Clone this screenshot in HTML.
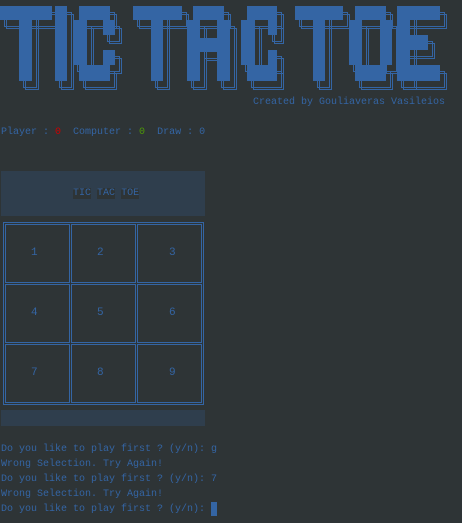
<!DOCTYPE html><html><head><style>
body{margin:0;width:462px;height:523px;background:#2e3436;overflow:hidden;position:relative;font-family:"Liberation Mono","DejaVu Sans Mono",monospace;font-size:10px;color:#3465a4}
.t{position:absolute;white-space:pre;line-height:12px}
.c{position:absolute;border:1px solid #3465a4;box-sizing:border-box;width:65px;height:59px}
.n{position:absolute;font-size:11px}
</style></head><body>
<svg width="462" height="100" style="position:absolute;left:0;top:0">
<defs><g id="L">
<rect x="0" y="6" width="52" height="14"/><rect x="19" y="6" width="13" height="75"/>
<rect x="55" y="6" width="12" height="75"/>
<rect x="79" y="6" width="31" height="14"/><rect x="73" y="20" width="14" height="45"/><rect x="79" y="65" width="31" height="16"/><rect x="103" y="20" width="12" height="15"/><rect x="103" y="50" width="12" height="15"/>
<rect x="133" y="6" width="49" height="14"/><rect x="151" y="6" width="12" height="75"/>
<rect x="187" y="20" width="13" height="61"/><rect x="217" y="20" width="13" height="61"/><rect x="193" y="6" width="31" height="14"/><rect x="200" y="38" width="17" height="14"/>
<rect x="247" y="6" width="30" height="14"/><rect x="241" y="20" width="14" height="45"/><rect x="247" y="65" width="30" height="16"/><rect x="268" y="20" width="9" height="15"/><rect x="268" y="50" width="9" height="15"/>
<rect x="295" y="6" width="48" height="14"/><rect x="313" y="6" width="12" height="75"/>
<rect x="355" y="6" width="31" height="14"/><rect x="349" y="20" width="13" height="45"/><rect x="380" y="20" width="12" height="45"/><rect x="355" y="65" width="31" height="16"/>
<rect x="397" y="6" width="13" height="75"/><rect x="397" y="6" width="43" height="14"/><rect x="397" y="35" width="31" height="15"/><rect x="397" y="65" width="43" height="16"/>
</g></defs>
<g fill="none" stroke="#3465a4" stroke-width="1">
<use href="#L" transform="translate(4.5,6.5)"/>
<use href="#L" transform="translate(6.5,8.5)"/>
</g>
<g fill="#3465a4"><use href="#L"/></g>
</svg>
<div class="t" style="left:253px;top:97px">Created by Gouliaveras Vasileios</div>
<div class="t" style="left:1px;top:127px">Player : <span style="color:#cc0000">0</span>  Computer : <span style="color:#4e9a06">0</span>  Draw : 0</div>
<div style="position:absolute;left:1px;top:171px;width:204px;height:45px;background:#2f3e4d"></div>
<div class="t" style="left:73px;top:188px"><span style="background:#2e3436">TIC</span> <span style="background:#2e3436">TAC</span> <span style="background:#2e3436">TOE</span></div>
<div style="position:absolute;left:3px;top:222px;width:201px;height:183px;border:1px solid #3465a4;box-sizing:border-box"></div>
<div class="c" style="left:5px;top:224px"></div><div class="c" style="left:71px;top:224px"></div><div class="c" style="left:137px;top:224px"></div>
<div class="c" style="left:5px;top:284px"></div><div class="c" style="left:71px;top:284px"></div><div class="c" style="left:137px;top:284px"></div>
<div class="c" style="left:5px;top:344px"></div><div class="c" style="left:71px;top:344px"></div><div class="c" style="left:137px;top:344px"></div>
<div class="n" style="left:31px;top:247px">1</div><div class="n" style="left:97px;top:247px">2</div><div class="n" style="left:169px;top:247px">3</div>
<div class="n" style="left:31px;top:307px">4</div><div class="n" style="left:97px;top:307px">5</div><div class="n" style="left:169px;top:307px">6</div>
<div class="n" style="left:31px;top:367px">7</div><div class="n" style="left:97px;top:367px">8</div><div class="n" style="left:169px;top:367px">9</div>
<div style="position:absolute;left:1px;top:410px;width:204px;height:16px;background:#2f3e4d"></div>
<div class="t" style="left:1px;top:442px;line-height:15px">Do you like to play first ? (y/n): g
Wrong Selection. Try Again!
Do you like to play first ? (y/n): 7
Wrong Selection. Try Again!
Do you like to play first ? (y/n): </div>
<div style="position:absolute;left:211px;top:502px;width:6px;height:14px;background:#3465a4"></div>
</body></html>
